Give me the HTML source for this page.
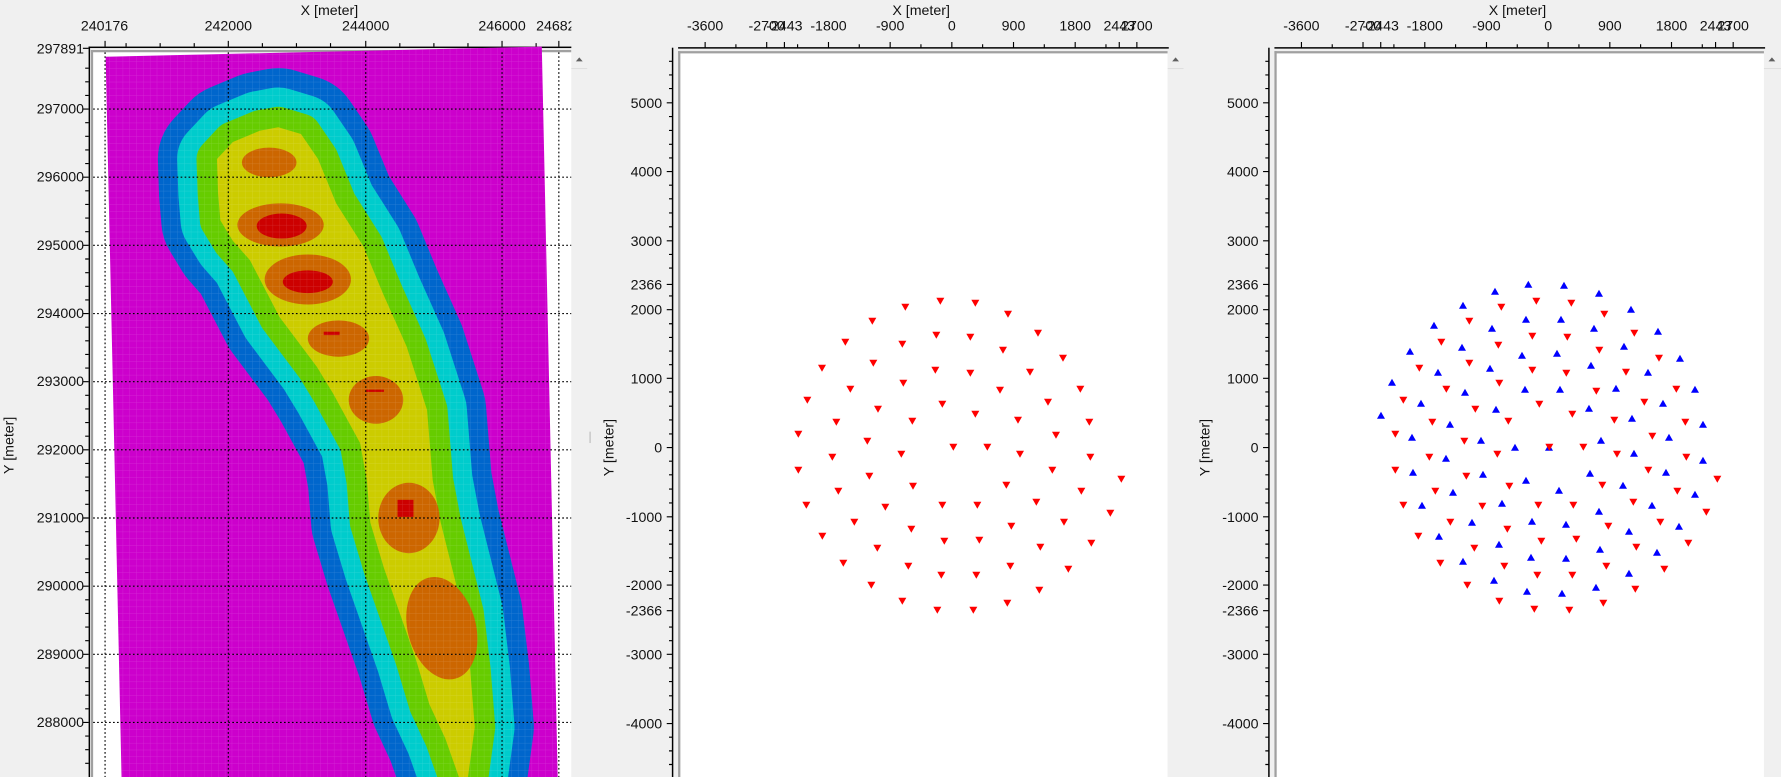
<!DOCTYPE html>
<html><head><meta charset="utf-8"><style>
html,body{margin:0;padding:0;background:#f0f0f0;overflow:hidden}
svg{display:block}
text{font-family:"Liberation Sans",sans-serif;font-size:12.5px;fill:#111}
</style></head><body>
<svg width="1781" height="777" viewBox="0 0 1568 684" preserveAspectRatio="none" xmlns="http://www.w3.org/2000/svg">
<defs>
<path id="td" d="M-12,-9 L12,-9 L0,12 Z" fill="#ff0000"/>
<path id="tu" d="M-12,9 L12,9 L0,-12 Z" fill="#0000ff"/>
<clipPath id="c1"><path d="M93,50 L477,41 L491,684 L107,684 Z"/></clipPath>
<clipPath id="c0"><rect x="0" y="0" width="503" height="40"/></clipPath>
<pattern id="grid" width="6" height="6" patternUnits="userSpaceOnUse"><path d="M0,0 H6 M0,0 V6" stroke="#ffffff" stroke-opacity="0.18" stroke-width="0.6"/></pattern>
<path id="yl" d="M229,115 L205,125 L191,140 L192,170 L194,194 L205,212 L220,229 L246,279 L279,323 L293,346 L317,390 L323,423 L326,460 L338,500 L352,540 L366,580 L378,620 L392,650 L404,684 L412,684 L418,640 L414,590 L408,540 L398,500 L388,460 L381,423 L376,361 L358,305 L337,258 L320,217 L296,179 L280,140 L265,118 L245,112 Z"/>
</defs>
<rect width="1568" height="684" fill="#f0f0f0"/>

<!-- ============ PANEL 1 ============ -->
<text x="290" y="13" text-anchor="middle">X [meter]</text>
<text x="92" y="27" text-anchor="middle">240176</text>
<text x="201" y="27" text-anchor="middle">242000</text>
<text x="322" y="27" text-anchor="middle">244000</text>
<text x="442" y="27" text-anchor="middle">246000</text>
<text x="472" y="27" clip-path="url(#c0)">246828</text>
<rect x="78" y="41" width="425" height="1.3" fill="#000"/>
<g stroke="#000" stroke-width="1">
<path d="M92.5,41 v-5 M201,41 v-5 M322,41 v-5 M442,41 v-5 M492,41 v-5 M111,41 v-3 M141,41 v-3 M171,41 v-3 M231,41 v-3 M261,41 v-3 M291,41 v-3 M352,41 v-3 M382,41 v-3 M412,41 v-3 M472,41 v-3"/>
</g>
<rect x="78" y="41" width="1.3" height="643" fill="#000"/>
<g stroke="#000" stroke-width="1">
<path d="M78,42.5 h-5 M78,96 h-5 M78,156 h-5 M78,216 h-5 M78,276 h-5 M78,336 h-5 M78,396 h-5 M78,456 h-5 M78,516 h-5 M78,576 h-5 M78,636 h-5
M78,60 h-3 M78,72 h-3 M78,84 h-3 M78,108 h-3 M78,120 h-3 M78,132 h-3 M78,144 h-3 M78,168 h-3 M78,180 h-3 M78,192 h-3 M78,204 h-3 M78,228 h-3 M78,240 h-3 M78,252 h-3 M78,264 h-3 M78,288 h-3 M78,300 h-3 M78,312 h-3 M78,324 h-3 M78,348 h-3 M78,360 h-3 M78,372 h-3 M78,384 h-3 M78,408 h-3 M78,420 h-3 M78,432 h-3 M78,444 h-3 M78,468 h-3 M78,480 h-3 M78,492 h-3 M78,504 h-3 M78,528 h-3 M78,540 h-3 M78,552 h-3 M78,564 h-3 M78,588 h-3 M78,600 h-3 M78,612 h-3 M78,624 h-3 M78,648 h-3 M78,660 h-3 M78,672 h-3"/>
</g>
<g text-anchor="end">
<text x="74" y="47">297891</text><text x="74" y="100">297000</text><text x="74" y="160">296000</text><text x="74" y="220">295000</text><text x="74" y="280">294000</text><text x="74" y="340">293000</text><text x="74" y="400">292000</text><text x="74" y="460">291000</text><text x="74" y="520">290000</text><text x="74" y="580">289000</text><text x="74" y="640">288000</text>
</g>
<text transform="translate(12,392) rotate(-90)" text-anchor="middle">Y [meter]</text>
<rect x="80" y="44" width="423" height="640" fill="#ffffff"/>
<rect x="80" y="44" width="2" height="640" fill="#a0a0a0"/>
<rect x="80" y="44" width="423" height="2" fill="#a0a0a0"/>
<path d="M93,50 L477,41 L491,684 L107,684 Z" fill="#cc00cc"/>
<g clip-path="url(#c1)" stroke-linejoin="round">
<use href="#yl" fill="#0066cc" stroke="#0066cc" stroke-width="104"/>
<use href="#yl" fill="#00cccc" stroke="#00cccc" stroke-width="70"/>
<use href="#yl" fill="#66cc00" stroke="#66cc00" stroke-width="36"/>
<use href="#yl" fill="#cccc00"/>
<g fill="#cc6600">
<ellipse cx="237" cy="143" rx="24" ry="13"/>
<ellipse cx="247" cy="198" rx="38" ry="19"/>
<ellipse cx="271" cy="246" rx="38" ry="22"/>
<ellipse cx="298" cy="298" rx="27" ry="16"/>
<ellipse cx="331" cy="352" rx="24" ry="21"/>
<ellipse cx="360" cy="456" rx="27" ry="31"/>
<ellipse cx="389" cy="553" rx="30" ry="46" transform="rotate(-15 389 553)"/>
</g>
<g fill="#cc0000">
<ellipse cx="248" cy="199" rx="22" ry="11"/>
<ellipse cx="271" cy="248" rx="22" ry="10"/>
<rect x="350" y="440" width="14" height="15"/>
<rect x="285" y="292" width="14" height="3"/>
<rect x="322" y="343" width="16" height="2"/>
</g>
<rect x="80" y="40" width="430" height="650" fill="url(#grid)"/>
</g>
<g stroke="#000" stroke-width="1" stroke-dasharray="1.5,2" fill="none">
<path d="M92.5,46 V684 M201,46 V684 M322,46 V684 M442,46 V684 M492,46 V684"/>
<path d="M82,96 H503 M82,156 H503 M82,216 H503 M82,276 H503 M82,336 H503 M82,396 H503 M82,456 H503 M82,516 H503 M82,576 H503 M82,636 H503"/>
</g>
<rect x="503" y="44" width="14" height="640" fill="#f0f0f0"/>
<rect x="503" y="60" width="14" height="0.8" fill="#dcdcdc"/>
<path d="M507,54 L510,50.5 L513,54 Z" fill="#606060"/>
<rect x="519" y="380" width="1" height="10" fill="#bbb"/>

<!-- ============ PANEL 2 ============ -->
<text x="811" y="13" text-anchor="middle">X [meter]</text>
<g text-anchor="middle">
<text x="620.8" y="27">-3600</text><text x="675" y="27">-2700</text><text x="690.6" y="27">-2443</text><text x="729.4" y="27">-1800</text><text x="783.7" y="27">-900</text><text x="838" y="27">0</text><text x="892.3" y="27">900</text><text x="946.6" y="27">1800</text><text x="985.4" y="27">2443</text><text x="1000.9" y="27">2700</text>
</g>
<rect x="597" y="41.5" width="432" height="1.3" fill="#000"/>
<g stroke="#000" stroke-width="1">
<path d="M620.8,42 v-5 M675,42 v-5 M690.6,42 v-5 M729.4,42 v-5 M783.7,42 v-5 M838,42 v-5 M892.3,42 v-5 M946.6,42 v-5 M985.4,42 v-5 M1000.9,42 v-5 M647.9,42 v-3 M702.2,42 v-3 M756.5,42 v-3 M810.8,42 v-3 M865.1,42 v-3 M919.4,42 v-3 M973.7,42 v-3"/>
</g>
<rect x="591.5" y="42" width="1.3" height="642" fill="#000"/>
<g stroke="#000" stroke-width="1">
<path d="M592,90.5 h-5 M592,151 h-5 M592,212 h-5 M592,250.4 h-5 M592,272.6 h-5 M592,333 h-5 M592,394 h-5 M592,455 h-5 M592,515 h-5 M592,537.6 h-5 M592,576 h-5 M592,637 h-5
M592,54 h-3 M592,66 h-3 M592,78 h-3 M592,102.6 h-3 M592,114.8 h-3 M592,127 h-3 M592,139 h-3 M592,163 h-3 M592,175 h-3 M592,187.5 h-3 M592,199.7 h-3 M592,224 h-3 M592,236 h-3 M592,260.5 h-3 M592,285 h-3 M592,297 h-3 M592,309 h-3 M592,321 h-3 M592,345 h-3 M592,357.6 h-3 M592,369.7 h-3 M592,382 h-3 M592,406 h-3 M592,418 h-3 M592,430.5 h-3 M592,442.7 h-3 M592,467 h-3 M592,479 h-3 M592,491 h-3 M592,503 h-3 M592,527 h-3 M592,552 h-3 M592,564 h-3 M592,588 h-3 M592,600 h-3 M592,612.5 h-3 M592,624.7 h-3 M592,649 h-3 M592,661 h-3 M592,673 h-3"/>
</g>
<g text-anchor="end">
<text x="583" y="95">5000</text><text x="583" y="155.5">4000</text><text x="583" y="216.5">3000</text><text x="583" y="255">2366</text><text x="583" y="277">2000</text><text x="583" y="337.5">1000</text><text x="583" y="398.5">0</text><text x="583" y="459.5">-1000</text><text x="583" y="519.5">-2000</text><text x="583" y="542">-2366</text><text x="583" y="580.5">-3000</text><text x="583" y="641.5">-4000</text>
</g>
<text transform="translate(540,394) rotate(-90)" text-anchor="middle">Y [meter]</text>
<rect x="597" y="45" width="431" height="639" fill="#ffffff"/>
<rect x="597" y="45" width="2" height="639" fill="#a0a0a0"/>
<rect x="597" y="45" width="431" height="2" fill="#a0a0a0"/>
<rect x="1028" y="45" width="14" height="639" fill="#f0f0f0"/>
<rect x="1028" y="60" width="14" height="0.8" fill="#dcdcdc"/>
<path d="M1032,54 L1035,50.5 L1038,54 Z" fill="#606060"/>

<g transform="scale(0.88040) translate(780,280) scale(0.33333)">
<use href="#td" x="376" y="80"/><use href="#td" x="481" y="62"/><use href="#td" x="586" y="68"/><use href="#td" x="684" y="101"/><use href="#td" x="277" y="122"/><use href="#td" x="774" y="158"/><use href="#td" x="196" y="185"/><use href="#td" x="367" y="191"/><use href="#td" x="469" y="164"/><use href="#td" x="571" y="170"/><use href="#td" x="669" y="209"/><use href="#td" x="849" y="233"/><use href="#td" x="126" y="263"/><use href="#td" x="280" y="248"/><use href="#td" x="466" y="269"/><use href="#td" x="571" y="278"/><use href="#td" x="750" y="275"/><use href="#td" x="211" y="326"/><use href="#td" x="370" y="308"/><use href="#td" x="660" y="329"/><use href="#td" x="901" y="326"/><use href="#td" x="82" y="359"/><use href="#td" x="294" y="386"/><use href="#td" x="487" y="371"/><use href="#td" x="586" y="401"/><use href="#td" x="804" y="365"/><use href="#td" x="169" y="425"/><use href="#td" x="397" y="422"/><use href="#td" x="714" y="419"/><use href="#td" x="928" y="425"/><use href="#td" x="55" y="461"/><use href="#td" x="262" y="482"/><use href="#td" x="520" y="500"/><use href="#td" x="622" y="500"/><use href="#td" x="828" y="464"/><use href="#td" x="157" y="530"/><use href="#td" x="364" y="521"/><use href="#td" x="720" y="521"/><use href="#td" x="931" y="530"/><use href="#td" x="55" y="569"/><use href="#td" x="268" y="587"/><use href="#td" x="399" y="617"/><use href="#td" x="679" y="614"/><use href="#td" x="817" y="569"/><use href="#td" x="1024" y="596"/><use href="#td" x="175" y="632"/><use href="#td" x="904" y="632"/><use href="#td" x="79" y="674"/><use href="#td" x="316" y="680"/><use href="#td" x="487" y="674"/><use href="#td" x="592" y="674"/><use href="#td" x="769" y="665"/><use href="#td" x="991" y="698"/><use href="#td" x="223" y="725"/><use href="#td" x="394" y="746"/><use href="#td" x="694" y="737"/><use href="#td" x="852" y="725"/><use href="#td" x="127" y="767"/><use href="#td" x="292" y="803"/><use href="#td" x="493" y="782"/><use href="#td" x="598" y="779"/><use href="#td" x="781" y="800"/><use href="#td" x="934" y="788"/><use href="#td" x="190" y="848"/><use href="#td" x="385" y="857"/><use href="#td" x="484" y="884"/><use href="#td" x="589" y="884"/><use href="#td" x="691" y="857"/><use href="#td" x="865" y="866"/><use href="#td" x="274" y="914"/><use href="#td" x="778" y="929"/><use href="#td" x="367" y="962"/><use href="#td" x="472" y="989"/><use href="#td" x="580" y="989"/><use href="#td" x="682" y="968"/>
</g>

<!-- ============ PANEL 3 ============ -->
<text x="1336" y="13" text-anchor="middle">X [meter]</text>
<g text-anchor="middle">
<text x="1145.8" y="27">-3600</text><text x="1200" y="27">-2700</text><text x="1215.6" y="27">-2443</text><text x="1254.4" y="27">-1800</text><text x="1308.7" y="27">-900</text><text x="1363" y="27">0</text><text x="1417.3" y="27">900</text><text x="1471.6" y="27">1800</text><text x="1510.4" y="27">2443</text><text x="1525.9" y="27">2700</text>
</g>
<rect x="1122" y="41.5" width="432" height="1.3" fill="#000"/>
<g stroke="#000" stroke-width="1">
<path d="M1145.8,42 v-5 M1200,42 v-5 M1215.6,42 v-5 M1254.4,42 v-5 M1308.7,42 v-5 M1363,42 v-5 M1417.3,42 v-5 M1471.6,42 v-5 M1510.4,42 v-5 M1525.9,42 v-5 M1172.9,42 v-3 M1227.2,42 v-3 M1281.5,42 v-3 M1335.8,42 v-3 M1390.1,42 v-3 M1444.4,42 v-3 M1498.7,42 v-3"/>
</g>
<rect x="1116.5" y="42" width="1.3" height="642" fill="#000"/>
<g stroke="#000" stroke-width="1">
<path d="M1117,90.5 h-5 M1117,151 h-5 M1117,212 h-5 M1117,250.4 h-5 M1117,272.6 h-5 M1117,333 h-5 M1117,394 h-5 M1117,455 h-5 M1117,515 h-5 M1117,537.6 h-5 M1117,576 h-5 M1117,637 h-5
M1117,54 h-3 M1117,66 h-3 M1117,78 h-3 M1117,102.6 h-3 M1117,114.8 h-3 M1117,127 h-3 M1117,139 h-3 M1117,163 h-3 M1117,175 h-3 M1117,187.5 h-3 M1117,199.7 h-3 M1117,224 h-3 M1117,236 h-3 M1117,260.5 h-3 M1117,285 h-3 M1117,297 h-3 M1117,309 h-3 M1117,321 h-3 M1117,345 h-3 M1117,357.6 h-3 M1117,369.7 h-3 M1117,382 h-3 M1117,406 h-3 M1117,418 h-3 M1117,430.5 h-3 M1117,442.7 h-3 M1117,467 h-3 M1117,479 h-3 M1117,491 h-3 M1117,503 h-3 M1117,527 h-3 M1117,552 h-3 M1117,564 h-3 M1117,588 h-3 M1117,600 h-3 M1117,612.5 h-3 M1117,624.7 h-3 M1117,649 h-3 M1117,661 h-3 M1117,673 h-3"/>
</g>
<g text-anchor="end">
<text x="1108" y="95">5000</text><text x="1108" y="155.5">4000</text><text x="1108" y="216.5">3000</text><text x="1108" y="255">2366</text><text x="1108" y="277">2000</text><text x="1108" y="337.5">1000</text><text x="1108" y="398.5">0</text><text x="1108" y="459.5">-1000</text><text x="1108" y="519.5">-2000</text><text x="1108" y="542">-2366</text><text x="1108" y="580.5">-3000</text><text x="1108" y="641.5">-4000</text>
</g>
<text transform="translate(1065,394) rotate(-90)" text-anchor="middle">Y [meter]</text>
<rect x="1122" y="45" width="431" height="639" fill="#ffffff"/>
<rect x="1122" y="45" width="2" height="639" fill="#a0a0a0"/>
<rect x="1122" y="45" width="431" height="2" fill="#a0a0a0"/>
<rect x="1553" y="45" width="15" height="639" fill="#f0f0f0"/>
<rect x="1553" y="60" width="15" height="0.8" fill="#dcdcdc"/>
<path d="M1557,54 L1560,50.5 L1563,54 Z" fill="#606060"/>

<g transform="scale(0.88040) translate(1370,270) scale(0.33333)">
<use href="#tu" x="475" y="44"/><use href="#tu" x="582" y="47"/><use href="#tu" x="375" y="65"/><use href="#tu" x="687" y="71"/><use href="#tu" x="279" y="107"/><use href="#tu" x="783" y="119"/><use href="#tu" x="192" y="167"/><use href="#tu" x="366" y="176"/><use href="#tu" x="468" y="149"/><use href="#tu" x="573" y="149"/><use href="#tu" x="672" y="176"/><use href="#tu" x="864" y="185"/><use href="#tu" x="276" y="233"/><use href="#tu" x="456" y="257"/><use href="#tu" x="561" y="251"/><use href="#tu" x="762" y="230"/><use href="#tu" x="120" y="245"/><use href="#tu" x="930" y="266"/><use href="#tu" x="204" y="308"/><use href="#tu" x="360" y="296"/><use href="#tu" x="663" y="287"/><use href="#tu" x="834" y="308"/><use href="#tu" x="66" y="338"/><use href="#tu" x="285" y="368"/><use href="#tu" x="465" y="359"/><use href="#tu" x="570" y="359"/><use href="#tu" x="738" y="356"/><use href="#tu" x="975" y="359"/><use href="#tu" x="153" y="401"/><use href="#tu" x="378" y="419"/><use href="#tu" x="657" y="416"/><use href="#tu" x="879" y="401"/><use href="#tu" x="33" y="437"/><use href="#tu" x="240" y="464"/><use href="#tu" x="786" y="446"/><use href="#tu" x="999" y="464"/><use href="#tu" x="126" y="503"/><use href="#tu" x="333" y="512"/><use href="#tu" x="435" y="533"/><use href="#tu" x="537" y="533"/><use href="#tu" x="693" y="512"/><use href="#tu" x="897" y="503"/><use href="#tu" x="228" y="566"/><use href="#tu" x="792" y="551"/><use href="#tu" x="999" y="572"/><use href="#tu" x="129" y="608"/><use href="#tu" x="339" y="614"/><use href="#tu" x="660" y="611"/><use href="#tu" x="888" y="608"/><use href="#tu" x="468" y="632"/><use href="#tu" x="567" y="662"/><use href="#tu" x="759" y="647"/><use href="#tu" x="249" y="668"/><use href="#tu" x="975" y="674"/><use href="#tu" x="156" y="707"/><use href="#tu" x="396" y="701"/><use href="#tu" x="846" y="707"/><use href="#tu" x="687" y="725"/><use href="#tu" x="306" y="758"/><use href="#tu" x="486" y="755"/><use href="#tu" x="588" y="764"/><use href="#tu" x="927" y="770"/><use href="#tu" x="207" y="800"/><use href="#tu" x="777" y="785"/><use href="#tu" x="387" y="824"/><use href="#tu" x="690" y="839"/><use href="#tu" x="861" y="848"/><use href="#tu" x="483" y="863"/><use href="#tu" x="588" y="866"/><use href="#tu" x="279" y="875"/><use href="#tu" x="777" y="911"/><use href="#tu" x="372" y="932"/><use href="#tu" x="678" y="953"/><use href="#tu" x="471" y="965"/><use href="#tu" x="576" y="971"/>
<use href="#td" x="499" y="92"/><use href="#td" x="604" y="98"/><use href="#td" x="394" y="110"/><use href="#td" x="703" y="131"/><use href="#td" x="298" y="152"/><use href="#td" x="793" y="188"/><use href="#td" x="487" y="197"/><use href="#td" x="592" y="200"/><use href="#td" x="214" y="215"/><use href="#td" x="385" y="224"/><use href="#td" x="688" y="239"/><use href="#td" x="867" y="263"/><use href="#td" x="298" y="278"/><use href="#td" x="487" y="299"/><use href="#td" x="589" y="308"/><use href="#td" x="768" y="305"/><use href="#td" x="148" y="293"/><use href="#td" x="229" y="356"/><use href="#td" x="388" y="338"/><use href="#td" x="679" y="362"/><use href="#td" x="919" y="356"/><use href="#td" x="100" y="389"/><use href="#td" x="508" y="401"/><use href="#td" x="316" y="416"/><use href="#td" x="607" y="431"/><use href="#td" x="823" y="395"/><use href="#td" x="187" y="455"/><use href="#td" x="415" y="452"/><use href="#td" x="733" y="449"/><use href="#td" x="946" y="455"/><use href="#td" x="76" y="491"/><use href="#td" x="283" y="512"/><use href="#td" x="538" y="530"/><use href="#td" x="640" y="530"/><use href="#td" x="847" y="497"/><use href="#td" x="178" y="560"/><use href="#td" x="382" y="551"/><use href="#td" x="741" y="551"/><use href="#td" x="949" y="560"/><use href="#td" x="76" y="599"/><use href="#td" x="289" y="617"/><use href="#td" x="418" y="647"/><use href="#td" x="697" y="644"/><use href="#td" x="835" y="599"/><use href="#td" x="1042" y="626"/><use href="#td" x="196" y="662"/><use href="#td" x="922" y="662"/><use href="#td" x="100" y="704"/><use href="#td" x="337" y="707"/><use href="#td" x="505" y="704"/><use href="#td" x="610" y="704"/><use href="#td" x="790" y="695"/><use href="#td" x="1009" y="725"/><use href="#td" x="241" y="755"/><use href="#td" x="412" y="776"/><use href="#td" x="715" y="767"/><use href="#td" x="871" y="755"/><use href="#td" x="145" y="797"/><use href="#td" x="313" y="833"/><use href="#td" x="514" y="812"/><use href="#td" x="619" y="806"/><use href="#td" x="799" y="830"/><use href="#td" x="955" y="818"/><use href="#td" x="211" y="878"/><use href="#td" x="403" y="887"/><use href="#td" x="502" y="914"/><use href="#td" x="607" y="914"/><use href="#td" x="709" y="887"/><use href="#td" x="883" y="896"/><use href="#td" x="292" y="944"/><use href="#td" x="796" y="956"/><use href="#td" x="388" y="992"/><use href="#td" x="493" y="1016"/><use href="#td" x="598" y="1019"/><use href="#td" x="700" y="998"/>
</g>
</svg>
</body></html>
